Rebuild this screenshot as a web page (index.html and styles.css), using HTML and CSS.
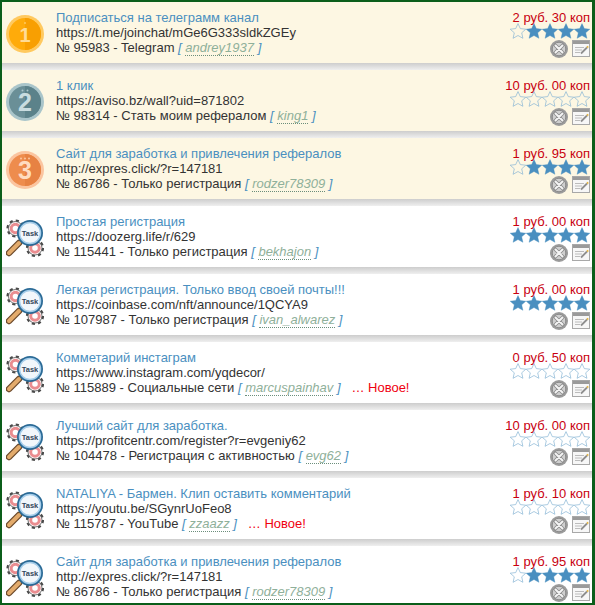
FILE: index.html
```html
<!DOCTYPE html>
<html lang="ru">
<head>
  <meta charset="UTF-8">
  <title>Задания</title>
  <link rel="stylesheet" href="styles.css">
</head>
<body>
<svg class="defs" width="0" height="0">
  <symbol id="star" viewBox="0 0 16 16">
    <path d="M8 .6l2.300 5 5.500.6-4.100 3.600 1.200 5.500L8 12.500l-4.900 2.800 1.200-5.500L.2 6.200l5.500-.6z"/>
  </symbol>
  <symbol id="del" viewBox="0 0 18 18">
    <circle cx="9" cy="9" r="9" fill="#9c9c9c"/>
    <circle cx="9" cy="9" r="6.800" fill="#cfcfcf" stroke="#8a8a8a"/>
    <path d="M5.500 5.500l7 7M12.500 5.500l-7 7" stroke="#8a8a8a" stroke-width="3.600" stroke-linecap="round"/>
    <path d="M5.500 5.500l7 7M12.500 5.500l-7 7" stroke="#f4f4f4" stroke-width="2" stroke-linecap="round"/>
  </symbol>
  <symbol id="note" viewBox="0 0 18 18">
    <rect x=".5" y=".5" width="17" height="16" fill="#f7f7f7" stroke="#a8a8a8"/>
    <rect x="1" y="1" width="16" height="3" fill="#9a9a9a"/>
    <path d="M3 7.500h9M3 10h7M3 12.500h5" stroke="#bcbcbc"/>
    <path d="M9 13.500l6-6" stroke="#8f8f8f" stroke-width="1.800"/>
    <path d="M15 7.500l1.200-1.200" stroke="#e2b23f" stroke-width="1.800"/>
  </symbol>
  <symbol id="gears" viewBox="0 0 38 42">
    <circle cx="9.500" cy="9.500" r="7.600" class="teeth"/>
    <circle cx="9.500" cy="9.500" r="7" class="gear-body"/>
    <circle cx="9.500" cy="9.500" r="4.300" class="gear-core"/>
    <circle cx="29" cy="29" r="7.600" class="teeth"/>
    <circle cx="29" cy="29" r="7" class="gear-body"/>
    <circle cx="29" cy="29" r="4.300" class="gear-core"/>
    <path d="M13 24L3 34" stroke="#6d4a2b" stroke-width="6.500" stroke-linecap="round"/>
    <path d="M13 24L3 34" stroke="#e3ab6c" stroke-width="4" stroke-linecap="round"/>
    <circle cx="24" cy="14" r="13" fill="#2a6a96"/>
    <circle cx="24" cy="14" r="10.500" fill="#f2f7fb" stroke="#a5cdea" stroke-width="1.500"/>
  </symbol>
</svg>

<div class="list">

  <div class="row top">
    <svg class="pic medal" viewBox="0 0 38 38">
      <circle cx="19" cy="19" r="19" fill="#ffc95f"/>
      <circle cx="19" cy="19" r="16" fill="#ffab0a"/>
      <path d="M19 3a16 16 0 0 1 0 32z" fill="#f89f02"/>
      <circle cx="19" cy="8" r="1" fill="#ffc95f"/>
      <text x="19" y="26.500" class="digit digit-gold">1</text>
    </svg>
    <div class="info">
      <a class="name">Подписаться на телеграмм канал</a>
      <div>https://t.me/joinchat/mGe6G333sldkZGEy</div>
      <div>№ 95983 - Telegram <span class="br">[ <a class="user">andrey1937</a> ]</span></div>
    </div>
    <div class="side">
      <div class="price">2 руб. 30 коп</div>
      <div class="stars"><svg class="off"><use href="#star"/></svg><svg><use href="#star"/></svg><svg><use href="#star"/></svg><svg><use href="#star"/></svg><svg><use href="#star"/></svg></div>
      <div class="tools"><svg><use href="#del"/></svg><svg><use href="#note"/></svg></div>
    </div>
  </div>

  <div class="row top">
    <svg class="pic medal" viewBox="0 0 38 38">
      <circle cx="19" cy="19" r="19" fill="#a9c5ca"/>
      <circle cx="19" cy="19" r="16" fill="#6a8f97"/>
      <path d="M19 3a16 16 0 0 1 0 32z" fill="#5b828a"/>
      <circle cx="16.500" cy="7.500" r="1" fill="#a9c5ca"/>
      <circle cx="21.500" cy="7.500" r="1" fill="#a9c5ca"/>
      <text x="19" y="28" class="digit digit-silver">2</text>
    </svg>
    <div class="info">
      <a class="name">1 клик</a>
      <div>https://aviso.bz/wall?uid=871802</div>
      <div>№ 98314 - Стать моим рефералом <span class="br">[ <a class="user">king1</a> ]</span></div>
    </div>
    <div class="side">
      <div class="price">10 руб. 00 коп</div>
      <div class="stars"><svg class="off"><use href="#star"/></svg><svg class="off"><use href="#star"/></svg><svg class="off"><use href="#star"/></svg><svg class="off"><use href="#star"/></svg><svg class="off"><use href="#star"/></svg></div>
      <div class="tools"><svg><use href="#del"/></svg><svg><use href="#note"/></svg></div>
    </div>
  </div>

  <div class="row top">
    <svg class="pic medal" viewBox="0 0 38 38">
      <circle cx="19" cy="19" r="19" fill="#fbc5a0"/>
      <circle cx="19" cy="19" r="16" fill="#ee8c4d"/>
      <path d="M19 3a16 16 0 0 1 0 32z" fill="#e78243"/>
      <circle cx="15" cy="7.500" r="1" fill="#fbc5a0"/>
      <circle cx="19" cy="7.500" r="1" fill="#fbc5a0"/>
      <circle cx="23" cy="7.500" r="1" fill="#fbc5a0"/>
      <text x="19" y="28" class="digit digit-bronze">3</text>
    </svg>
    <div class="info">
      <a class="name">Сайт для заработка и привлечения рефералов</a>
      <div>http://expres.click/?r=147181</div>
      <div>№ 86786 - Только регистрация <span class="br">[ <a class="user">rodzer78309</a> ]</span></div>
    </div>
    <div class="side">
      <div class="price">1 руб. 95 коп</div>
      <div class="stars"><svg class="off"><use href="#star"/></svg><svg><use href="#star"/></svg><svg><use href="#star"/></svg><svg><use href="#star"/></svg><svg><use href="#star"/></svg></div>
      <div class="tools"><svg><use href="#del"/></svg><svg><use href="#note"/></svg></div>
    </div>
  </div>

  <div class="row">
    <svg class="pic" viewBox="0 0 38 42"><use href="#gears"/><text x="24" y="16.500" class="task-word">Task</text></svg>
    <div class="info">
      <a class="name">Простая регистрация</a>
      <div>https://doozerg.life/r/629</div>
      <div>№ 115441 - Только регистрация <span class="br">[ <a class="user">bekhajon</a> ]</span></div>
    </div>
    <div class="side">
      <div class="price">1 руб. 00 коп</div>
      <div class="stars"><svg><use href="#star"/></svg><svg><use href="#star"/></svg><svg><use href="#star"/></svg><svg><use href="#star"/></svg><svg><use href="#star"/></svg></div>
      <div class="tools"><svg><use href="#del"/></svg><svg><use href="#note"/></svg></div>
    </div>
  </div>

  <div class="row">
    <svg class="pic" viewBox="0 0 38 42"><use href="#gears"/><text x="24" y="16.500" class="task-word">Task</text></svg>
    <div class="info">
      <a class="name">Легкая регистрация. Только ввод своей почты!!!</a>
      <div>https://coinbase.com/nft/announce/1QCYA9</div>
      <div>№ 107987 - Только регистрация <span class="br">[ <a class="user">ivan_alwarez</a> ]</span></div>
    </div>
    <div class="side">
      <div class="price">1 руб. 00 коп</div>
      <div class="stars"><svg><use href="#star"/></svg><svg><use href="#star"/></svg><svg><use href="#star"/></svg><svg><use href="#star"/></svg><svg><use href="#star"/></svg></div>
      <div class="tools"><svg><use href="#del"/></svg><svg><use href="#note"/></svg></div>
    </div>
  </div>

  <div class="row">
    <svg class="pic" viewBox="0 0 38 42"><use href="#gears"/><text x="24" y="16.500" class="task-word">Task</text></svg>
    <div class="info">
      <a class="name">Комметарий инстаграм</a>
      <div>https://www.instagram.com/yqdecor/</div>
      <div>№ 115889 - Социальные сети <span class="br">[ <a class="user">marcuspainhav</a> ]</span> <span class="new">&nbsp;&nbsp;… Новое!</span></div>
    </div>
    <div class="side">
      <div class="price">0 руб. 50 коп</div>
      <div class="stars"><svg class="off"><use href="#star"/></svg><svg class="off"><use href="#star"/></svg><svg class="off"><use href="#star"/></svg><svg class="off"><use href="#star"/></svg><svg class="off"><use href="#star"/></svg></div>
      <div class="tools"><svg><use href="#del"/></svg><svg><use href="#note"/></svg></div>
    </div>
  </div>

  <div class="row">
    <svg class="pic" viewBox="0 0 38 42"><use href="#gears"/><text x="24" y="16.500" class="task-word">Task</text></svg>
    <div class="info">
      <a class="name">Лучший сайт для заработка.</a>
      <div>https://profitcentr.com/register?r=evgeniy62</div>
      <div>№ 104478 - Регистрация с активностью <span class="br">[ <a class="user">evg62</a> ]</span></div>
    </div>
    <div class="side">
      <div class="price">10 руб. 00 коп</div>
      <div class="stars"><svg class="off"><use href="#star"/></svg><svg class="off"><use href="#star"/></svg><svg class="off"><use href="#star"/></svg><svg class="off"><use href="#star"/></svg><svg class="off"><use href="#star"/></svg></div>
      <div class="tools"><svg><use href="#del"/></svg><svg><use href="#note"/></svg></div>
    </div>
  </div>

  <div class="row">
    <svg class="pic" viewBox="0 0 38 42"><use href="#gears"/><text x="24" y="16.500" class="task-word">Task</text></svg>
    <div class="info">
      <a class="name">NATALIYA - Бармен. Клип оставить комментарий</a>
      <div>https://youtu.be/SGynrUoFeo8</div>
      <div>№ 115787 - YouTube <span class="br">[ <a class="user">zzaazz</a> ]</span> <span class="new">&nbsp;&nbsp;… Новое!</span></div>
    </div>
    <div class="side">
      <div class="price">1 руб. 10 коп</div>
      <div class="stars"><svg class="off"><use href="#star"/></svg><svg class="off"><use href="#star"/></svg><svg class="off"><use href="#star"/></svg><svg class="off"><use href="#star"/></svg><svg class="off"><use href="#star"/></svg></div>
      <div class="tools"><svg><use href="#del"/></svg><svg><use href="#note"/></svg></div>
    </div>
  </div>

  <div class="row">
    <svg class="pic" viewBox="0 0 38 42"><use href="#gears"/><text x="24" y="16.500" class="task-word">Task</text></svg>
    <div class="info">
      <a class="name">Сайт для заработка и привлечения рефералов</a>
      <div>http://expres.click/?r=147181</div>
      <div>№ 86786 - Только регистрация <span class="br">[ <a class="user">rodzer78309</a> ]</span></div>
    </div>
    <div class="side">
      <div class="price">1 руб. 95 коп</div>
      <div class="stars"><svg class="off"><use href="#star"/></svg><svg><use href="#star"/></svg><svg><use href="#star"/></svg><svg><use href="#star"/></svg><svg><use href="#star"/></svg></div>
      <div class="tools"><svg><use href="#del"/></svg><svg><use href="#note"/></svg></div>
    </div>
  </div>

</div>
</body>
</html>
```

FILE: styles.css
```css
html, body {
  margin: 0;
  padding: 0;
}

body {
  width: 595px;
  height: 605px;
  overflow: hidden;
  font-family: "Liberation Sans", Arial, sans-serif;
  font-size: 13px;
  line-height: 15px;
  color: #333;
}

.defs {
  position: absolute;
}

.list {
  box-sizing: border-box;
  height: 605px;
  overflow: hidden;
  border: 2px solid #0b5e1a;
  border-right-width: 3px;
  background: #fff;
}

.row {
  display: flex;
  box-sizing: border-box;
  height: 68px;
  padding: 8px 2px 0 4px;
  background: linear-gradient(#cdcdcd, #efefef) bottom / 100% 7px no-repeat, #fff;
}

.top {
  background: linear-gradient(#cdcdcd, #efefef) bottom / 100% 7px no-repeat, #fdf7e3;
}

.pic {
  flex: none;
  width: 38px;
  height: 42px;
  margin: 5px 12px 0 0;
}

.medal {
  height: 38px;
}

.info {
  flex: 1;
  white-space: nowrap;
}

.name {
  color: #4a8fc0;
}

.br {
  color: #4a8fc0;
  font-style: italic;
}

.user {
  color: #8fb09a;
  border-bottom: 1px dotted #6b8e7b;
}

.new {
  color: #f0000f;
}

.side {
  flex: none;
  width: 90px;
  text-align: right;
}

.price {
  color: #c8000f;
  white-space: nowrap;
}

.stars {
  display: flex;
  justify-content: flex-end;
  height: 16px;
  margin-top: -2px;
}

.stars svg {
  width: 16px;
  height: 16px;
  fill: #4a8fc0;
  stroke: #4a8fc0;
  stroke-width: .4;
}

.stars svg.off {
  fill: none;
  stroke: #86b4d4;
  stroke-width: .7;
}

.tools {
  display: flex;
  justify-content: flex-end;
  gap: 4px;
  margin-top: 1px;
}

.tools svg {
  width: 18px;
  height: 18px;
}

.teeth {
  fill: none;
  stroke: #4a4a4a;
  stroke-width: 3;
  stroke-dasharray: 3 2.970;
}

.gear-body {
  fill: #fff;
  stroke: #4a4a4a;
  stroke-width: .8;
}

.gear-core {
  fill: #fff;
  stroke: #ea8d90;
  stroke-width: 3;
}

.task-word {
  font-family: "Liberation Sans", Arial, sans-serif;
  font-size: 7.500px;
  font-weight: 700;
  text-anchor: middle;
  fill: #33485c;
}

.digit {
  font-family: "Liberation Sans", Arial, sans-serif;
  font-size: 25px;
  font-weight: 700;
  text-anchor: middle;
}

.digit-gold {
  font-size: 20px;
  fill: #ffdc96;
}

.digit-silver {
  fill: #c9dde0;
}

.digit-bronze {
  fill: #ffdcc0;
}
```
